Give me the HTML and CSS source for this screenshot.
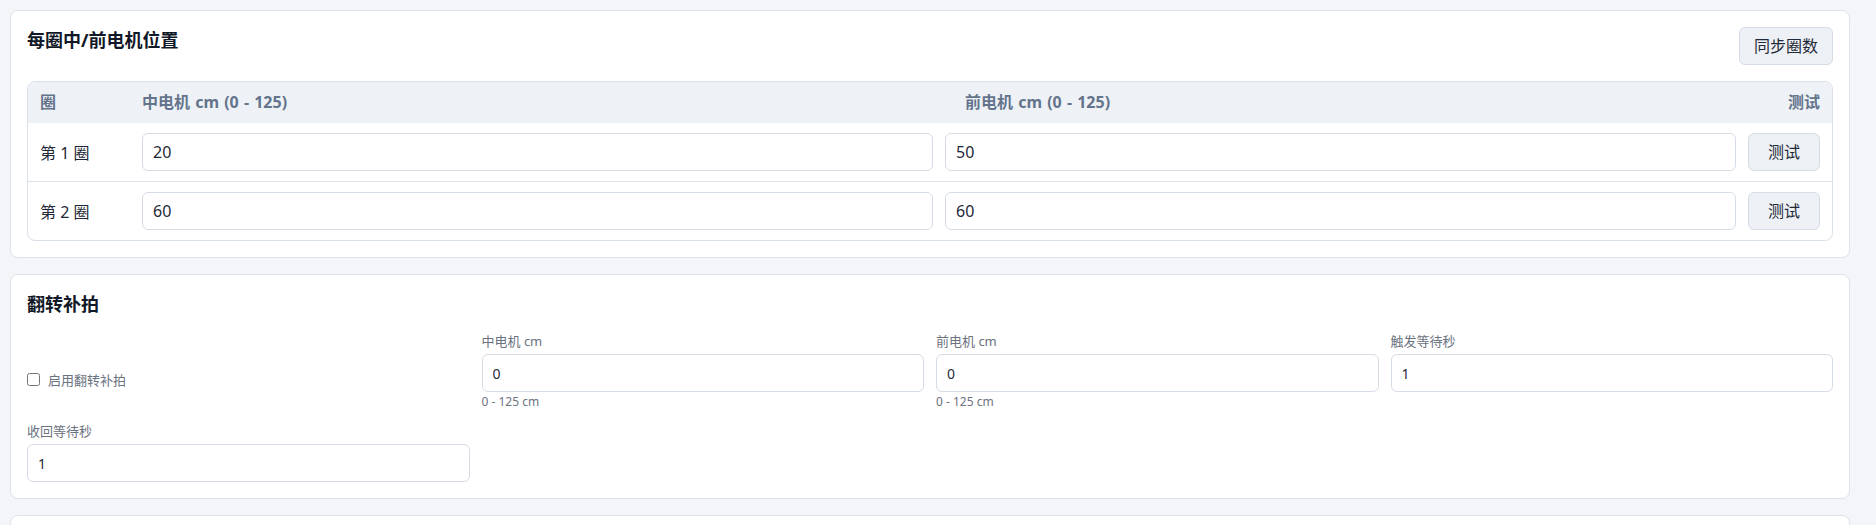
FILE: index.html
```html
<!DOCTYPE html>
<html lang="zh-CN">
<head>
<meta charset="utf-8">
<title>设置</title>
<link rel="stylesheet" href="styles.css">
</head>
<body>
<div class="page">
  <section class="card">
    <div class="card-head">
      <h2 class="card-title">每圈中/前电机位置</h2>
      <button class="btn" type="button">同步圈数</button>
    </div>
    <div class="laps">
      <div class="laps-head">
        <div>圈</div>
        <div>中电机 cm (0 - 125)</div>
        <div>前电机 cm (0 - 125)</div>
        <div>测试</div>
      </div>
      <div class="laps-row">
        <div class="lap-name">第 1 圈</div>
        <input class="input" type="text" value="20">
        <input class="input" type="text" value="50">
        <button class="btn" type="button">测试</button>
      </div>
      <div class="laps-row">
        <div class="lap-name">第 2 圈</div>
        <input class="input" type="text" value="60">
        <input class="input" type="text" value="60">
        <button class="btn" type="button">测试</button>
      </div>
    </div>
  </section>

  <section class="card">
    <h2 class="card-title card-title-block">翻转补拍</h2>
    <div class="form-grid">
      <label class="check"><input type="checkbox"><span>启用翻转补拍</span></label>
      <div class="field">
        <label class="field-label">中电机 cm</label>
        <input class="input input-sm" type="text" value="0">
        <div class="help">0 - 125 cm</div>
      </div>
      <div class="field">
        <label class="field-label">前电机 cm</label>
        <input class="input input-sm" type="text" value="0">
        <div class="help">0 - 125 cm</div>
      </div>
      <div class="field">
        <label class="field-label">触发等待秒</label>
        <input class="input input-sm" type="text" value="1">
      </div>
      <div class="field">
        <label class="field-label">收回等待秒</label>
        <input class="input input-sm" type="text" value="1">
      </div>
    </div>
  </section>

  <section class="card card-more"></section>
</div>
</body>
</html>
```

FILE: styles.css
```css
html, body {
  margin: 0;
  overflow: hidden;
}
body {
  background: #f4f5f8;
  font-family: "Noto Sans", "Noto Sans CJK SC", sans-serif;
  color: #1f2937;
}
.page {
  padding: 10px 26px 0 10px;
  display: flex;
  flex-direction: column;
  gap: 16px;
}
.card {
  background: #ffffff;
  border: 1px solid #dde2ea;
  border-radius: 8px;
  padding: 16px;
}
.card-more {
  min-height: 120px;
}
.card-head {
  display: flex;
  justify-content: space-between;
  align-items: flex-start;
  margin-bottom: 16px;
}
.card-title {
  margin: 0;
  font-size: 18px;
  line-height: 26px;
  font-weight: 700;
  color: #111827;
}
.card-title-block {
  margin-bottom: 15px;
}
.btn {
  font-family: inherit;
  font-size: 16px;
  line-height: 22px;
  color: #1f2937;
  background: #edf1f6;
  border: 1px solid #d6dce5;
  border-radius: 6px;
  padding: 7px 14px;
  height: 38px;
  box-sizing: border-box;
  cursor: pointer;
}
.laps-row .btn {
  padding: 7px 19px;
}
.laps {
  border: 1px solid #dbe1e9;
  border-radius: 8px;
  overflow: hidden;
}
.laps-head {
  display: grid;
  grid-template-columns: 90px 1fr 1fr auto;
  column-gap: 12px;
  padding: 10px 12px;
  background: #eef2f7;
  font-size: 16px;
  line-height: 21px;
  font-weight: 700;
  color: #64748b;
  word-spacing: 1px;
}
.laps-row {
  display: grid;
  grid-template-columns: 90px 1fr 1fr auto;
  column-gap: 12px;
  align-items: center;
  padding: 10px 12px;
}
.laps-row + .laps-row {
  border-top: 1px solid #dbe1e9;
}
.lap-name {
  font-size: 16px;
  color: #1f2937;
}
.input {
  font-family: inherit;
  font-size: 16px;
  color: #1f2937;
  height: 38px;
  box-sizing: border-box;
  width: 100%;
  min-width: 0;
  border: 1px solid #d6dce5;
  border-radius: 6px;
  padding: 0 10px;
  background: #ffffff;
  outline: none;
}
.input-sm {
  font-size: 14px;
}
.form-grid {
  display: grid;
  grid-template-columns: repeat(4, 1fr);
  column-gap: 12px;
  row-gap: 12px;
}
.check {
  display: flex;
  align-items: center;
  gap: 8px;
  padding-top: 17px;
  font-size: 13px;
  color: #6b7280;
}
.check input {
  margin: 0;
  width: 13px;
  height: 13px;
}
.field {
  display: flex;
  flex-direction: column;
  min-width: 0;
}
.field-label {
  font-size: 13px;
  line-height: 18px;
  color: #6b7280;
  margin-bottom: 4px;
}
.help {
  font-size: 12px;
  line-height: 16px;
  color: #6b7280;
  margin-top: 2px;
}
```
